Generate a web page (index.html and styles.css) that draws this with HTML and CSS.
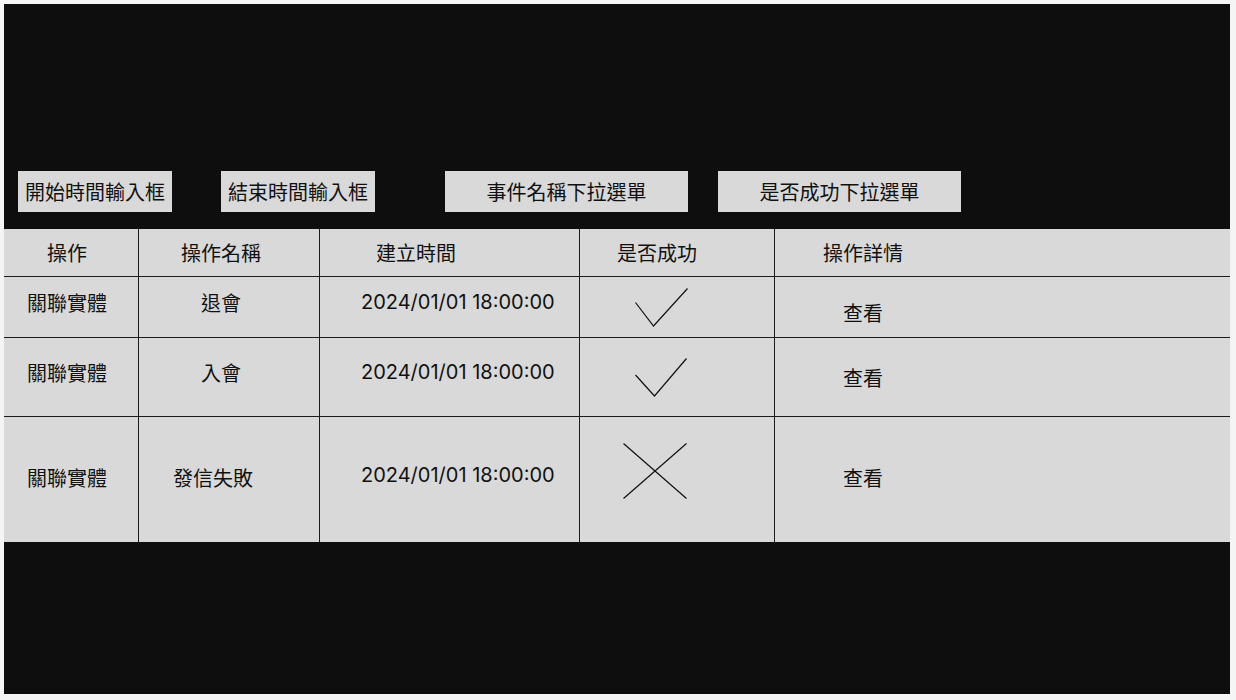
FILE: index.html
```html
<!DOCTYPE html>
<html lang="zh-Hant">
<head>
    <meta charset="UTF-8">
    <meta name="viewport" content="width=device-width, initial-scale=1.0">
    <title>操作紀錄</title>
    <link rel="stylesheet" href="styles.css">
</head>
<body>
    <div class="frame">
        <div class="filters">
            <div class="filter filter-date">開始時間輸入框</div>
            <div class="filter filter-date filter-end">結束時間輸入框</div>
            <div class="filter filter-select filter-event">事件名稱下拉選單</div>
            <div class="filter filter-select filter-status">是否成功下拉選單</div>
        </div>

        <div class="log-table">
            <div class="row row-head">
                <div class="cell col-type">操作</div>
                <div class="cell col-name">操作名稱</div>
                <div class="cell col-time">建立時間</div>
                <div class="cell col-ok">是否成功</div>
                <div class="cell col-detail">操作詳情</div>
            </div>
            <div class="row row-1">
                <div class="cell col-type">關聯實體</div>
                <div class="cell col-name">退會</div>
                <div class="cell col-time">2024/01/01 18:00:00</div>
                <div class="cell col-ok">
                    <svg class="mark" width="53" height="39" viewBox="0 0 53 39"><polyline points="0.5,14.5 18.5,38 52.5,0.5" /></svg>
                </div>
                <div class="cell col-detail"><span class="view-link">查看</span></div>
            </div>
            <div class="row row-2">
                <div class="cell col-type">關聯實體</div>
                <div class="cell col-name">入會</div>
                <div class="cell col-time">2024/01/01 18:00:00</div>
                <div class="cell col-ok">
                    <svg class="mark" width="53" height="39" viewBox="0 0 53 39"><polyline points="0.5,17 19.5,38 51.5,0.5" /></svg>
                </div>
                <div class="cell col-detail">查看</div>
            </div>
            <div class="row row-3">
                <div class="cell col-type">關聯實體</div>
                <div class="cell col-name">發信失敗</div>
                <div class="cell col-time">2024/01/01 18:00:00</div>
                <div class="cell col-ok">
                    <svg class="mark mark-fail" width="64" height="56" viewBox="0 0 64 56"><line x1="0.5" y1="0.5" x2="63.5" y2="55.5" /><line x1="63.5" y1="0.5" x2="0.5" y2="55.5" /></svg>
                </div>
                <div class="cell col-detail">查看</div>
            </div>
        </div>
    </div>
</body>
</html>
```

FILE: styles.css
```css
body {
    margin: 0;
    padding: 4px 6px 4px 4px;
    background-color: #f5f5f5;
    font-family: Inter, "Noto Sans CJK TC", sans-serif;
    font-size: 20px;
    color: #111;
}

.frame {
    height: 690px;
    background-color: #0e0e0e;
}

.filters {
    display: flex;
    padding: 167px 0 0 14px;
}

.filter {
    height: 41px;
    display: flex;
    align-items: center;
    justify-content: center;
    background-color: #d9d9d9;
    white-space: nowrap;
}

.filter-date {
    width: 154px;
}

.filter-select {
    width: 243px;
}

.filter-end {
    margin-left: 49px;
}

.filter-event {
    margin-left: 70px;
}

.filter-status {
    margin-left: 30px;
}

.log-table {
    margin-top: 17px;
    background-color: #d9d9d9;
}

.row {
    display: grid;
    grid-template-columns: 135px 181px 260px 195px 1fr;
    border-bottom: 1px solid #1c1c1c;
}

.row-head {
    height: 47px;
}

.row-1 {
    height: 60px;
}

.row-2 {
    height: 78px;
}

.row-3 {
    height: 125px;
    border-bottom: none;
}

.cell {
    display: flex;
    align-items: center;
    box-sizing: border-box;
    border-right: 1px solid #1c1c1c;
    white-space: nowrap;
}

.cell:last-child {
    border-right: none;
}

.col-type {
    justify-content: center;
    padding-right: 8px;
}

.col-name {
    justify-content: center;
    padding-right: 16px;
}

.col-time {
    padding-left: 41px;
}

.row-head .col-time {
    padding-left: 56px;
}

.col-ok {
    justify-content: center;
    padding-right: 32px;
}

.row-head .col-ok {
    justify-content: flex-start;
    padding: 0 0 0 37px;
}

.col-detail {
    padding-left: 68px;
}

.row-head .col-detail {
    padding-left: 48px;
}

.row-1 .col-type,
.row-1 .col-name,
.row-1 .col-time,
.row-2 .col-type,
.row-2 .col-name,
.row-2 .col-time,
.row-3 .col-time {
    padding-bottom: 10px;
}

.row-3 .col-type {
    padding-bottom: 4px;
}

.row-3 .col-name {
    justify-content: flex-start;
    padding: 0 0 4px 34px;
}

.row-3 .col-detail {
    padding-bottom: 4px;
}

.view-link {
    padding-top: 10px;
}

.mark {
    fill: none;
    stroke: #111;
    stroke-width: 1.2;
}

.mark-fail {
    margin-left: -12px;
    margin-top: -18px;
}
```
